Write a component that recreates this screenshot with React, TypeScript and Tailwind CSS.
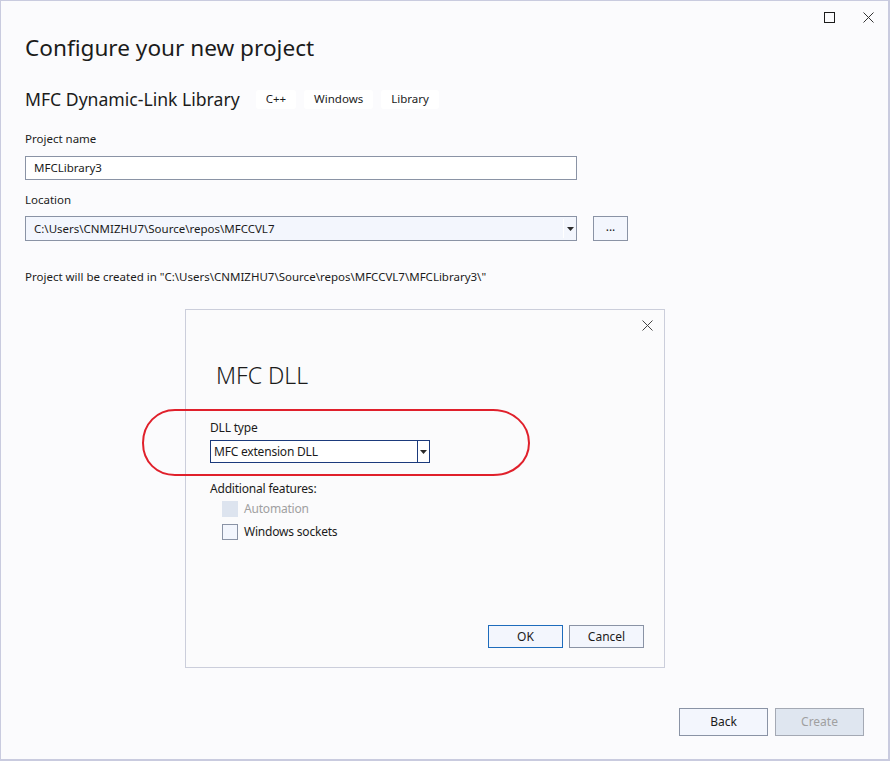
import React from 'react';

const Tag: React.FC<{ label: string }> = ({ label }) => (
  <span className="inline-flex h-[19px] items-center rounded-[3px] bg-white px-[10px] text-[11.5px] text-[#1b1b1b]">
    {label}
  </span>
);

const Arrow: React.FC = () => (
  <svg width="7" height="4" viewBox="0 0 7 4">
    <path d="M0 0h7L3.5 4z" fill="#2b2b2b" />
  </svg>
);

const MfcDialog: React.FC = () => (
  <div className="absolute left-[184px] top-[308px] flex h-[359px] w-[480px] flex-col border border-[#cbcedb] bg-[#fbfbfc]">
    <div className="flex justify-end pr-[11px] pt-[10px]">
      <svg width="11" height="11" viewBox="0 0 11 11">
        <path d="M0.5 0.5l10 10M10.5 0.5l-10 10" stroke="#444" strokeWidth="1" />
      </svg>
    </div>
    <div className="ml-[30px] mt-[29px] text-[23px] font-light leading-[30px] text-[#1b1b1b]">MFC DLL</div>
    <div className="ml-[24px] mt-[30px] text-[12px] leading-[16px] tracking-[-0.2px]">DLL type</div>
    <div className="ml-[24px] mt-[4px] flex h-[23px] w-[220px] border border-[#1b3a7c] bg-white">
      <div className="flex flex-1 items-center pl-[3px] text-[12px] tracking-[-0.2px]">MFC extension DLL</div>
      <div className="flex w-[12px] items-center justify-center border-l border-[#1b3a7c]">
        <Arrow />
      </div>
    </div>
    <div className="ml-[24px] mt-[18px] text-[12px] leading-[16px] tracking-[-0.2px]">Additional features:</div>
    <div className="ml-[36px] mt-[3px] flex flex-col gap-[5px]">
      <div className="flex items-center gap-[6px]">
        <span className="h-[16px] w-[16px] bg-[#dde4ef]" />
        <span className="text-[12px] tracking-[-0.2px] text-[#a0a0a0]">Automation</span>
      </div>
      <div className="flex items-center gap-[6px]">
        <span className="h-[16px] w-[16px] border border-[#8a93a5] bg-[#f3f6fd]" />
        <span className="text-[12px] tracking-[-0.2px]">Windows sockets</span>
      </div>
    </div>
    <div className="mt-auto mb-[19px] mr-[20px] flex justify-end gap-[6px]">
      <button className="h-[23px] w-[75px] border border-[#1e6cbc] bg-[#f3f6fd] text-[12px]">OK</button>
      <button className="h-[23px] w-[75px] border border-[#8a93a5] bg-[#f3f6fd] text-[12px]">Cancel</button>
    </div>
  </div>
);

export default function App() {
  return (
    <div
      className="relative flex h-[761px] w-[890px] flex-col border-l border-t border-r-2 border-b-2 border-[#c9cbdf] bg-[#fbfbfd] text-[#1b1b1b]"
      style={{ fontFamily: '"Noto Sans", "Open Sans", sans-serif' }}
    >
      <div className="flex h-[32px] items-center justify-end gap-[28px] pr-[14px] pt-[1px]">
        <svg width="11" height="11" viewBox="0 0 11 11">
          <rect x="0.5" y="0.5" width="10" height="10" fill="none" stroke="#1b1b1b" />
        </svg>
        <svg width="11" height="11" viewBox="0 0 11 11">
          <path d="M0.5 0.5l10 10M10.5 0.5l-10 10" stroke="#333" strokeWidth="1" />
        </svg>
      </div>

      <div className="pl-[24px]">
        <h1 className="text-[22.6px] leading-[30px]">Configure your new project</h1>

        <div className="mt-[26px] flex h-[20px] items-center">
          <span className="text-[17.6px] leading-[20px]">MFC Dynamic-Link Library</span>
          <div className="ml-[16px] flex gap-[8px]">
            <Tag label="C++" />
            <Tag label="Windows" />
            <Tag label="Library" />
          </div>
        </div>

        <div className="mt-[22px] text-[11.5px] leading-[16px]">Project name</div>
        <div className="mt-[9px] flex h-[24px] w-[552px] items-center border border-[#8a93a5] bg-white pl-[8px] text-[11.5px]">
          MFCLibrary3
        </div>

        <div className="mt-[12px] text-[11.5px] leading-[16px]">Location</div>
        <div className="mt-[8px] flex items-center gap-[16px]">
          <div className="flex h-[25px] w-[552px] border border-[#8a93a5] bg-[#f3f6fd]">
            <div className="flex flex-1 items-center pl-[8px] text-[11.5px]">
              C:\Users\CNMIZHU7\Source\repos\MFCCVL7
            </div>
            <div className="my-[2px] flex w-[13px] items-center justify-center border-l border-white">
              <Arrow />
            </div>
          </div>
          <button className="flex h-[25px] w-[35px] items-center justify-center border border-[#8a93a5] bg-[#f3f6fd] pb-[4px] text-[12px]">
            ...
          </button>
        </div>

        <div className="mt-[28px] text-[11.5px] leading-[16px]">
          Project will be created in "C:\Users\CNMIZHU7\Source\repos\MFCCVL7\MFCLibrary3\"
        </div>
      </div>

      <div className="mt-auto mb-[23px] mr-[24px] flex justify-end gap-[7px]">
        <button className="h-[28px] w-[89px] border border-[#8a93a5] bg-[#f3f6fd] text-[12px]">Back</button>
        <button className="h-[28px] w-[89px] border border-[#a4a9b4] bg-[#dfe6f0] text-[12px] text-[#a0a0a0]">
          Create
        </button>
      </div>

      <MfcDialog />

      <svg className="pointer-events-none absolute left-[140px] top-[407px]" width="392" height="70" viewBox="0 0 392 70">
        <path
          d="M34 2 H352 C372 2 388 16 388 35 C388 54 372 67 352 67 H34 C16 67 2 54 2 35 C2 16 16 2 34 2 Z"
          fill="none"
          stroke="#e0202b"
          strokeWidth="2"
        />
      </svg>
    </div>
  );
}
